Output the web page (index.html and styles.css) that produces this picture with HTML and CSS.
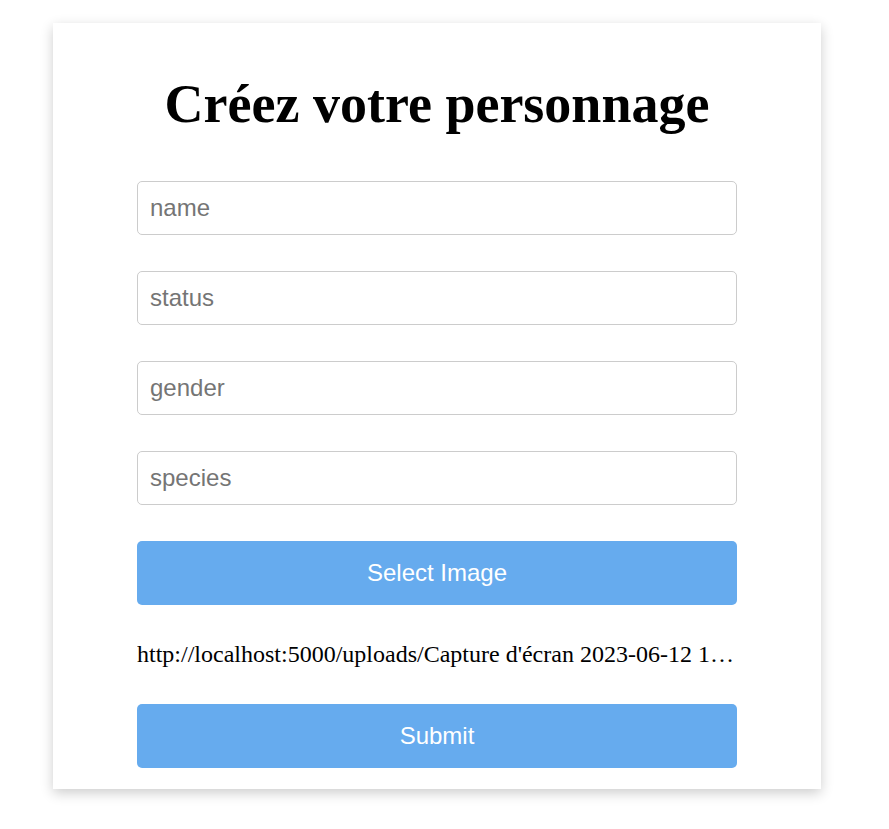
FILE: index.html
```html
<!DOCTYPE html>
<html lang="fr">
<head>
<meta charset="utf-8">
<title>Créez votre personnage</title>
<link rel="stylesheet" href="styles.css">
</head>
<body>
<div class="card">
  <h1 class="title">Créez votre personnage</h1>
  <form class="form">
    <input class="field" type="text" placeholder="name">
    <input class="field" type="text" placeholder="status">
    <input class="field" type="text" placeholder="gender">
    <input class="field" type="text" placeholder="species">
    <button class="btn" type="button">Select Image</button>
    <p class="url" title="http://localhost:5000/uploads/Capture d'écran 2023-06-12 153012.png">http://localhost:5000/uploads/Capture d'écran 2023-06-12 153012.png</p>
    <button class="btn" type="button">Submit</button>
  </form>
</div>
</body>
</html>
```
FILE: styles.css
```css
html, body {
  margin: 0;
  padding: 0;
  background: #fff;
}
body {
  font-family: "Liberation Serif", "Times New Roman", serif;
  padding-bottom: 30px;
}
.card {
  box-sizing: border-box;
  width: 768px;
  margin: 23px 0 0 53px;
  padding: 0 84px 21px;
  background: #fff;
  box-shadow: 0 4px 12px rgba(0, 0, 0, 0.2);
}
.title {
  margin: 0;
  padding-top: 50px;
  margin-bottom: 46px;
  font-family: "Liberation Serif", "Times New Roman", serif;
  font-size: 54px;
  line-height: 62px;
  font-weight: bold;
  text-align: center;
  white-space: nowrap;
  color: #000;
}
.form {
  display: flex;
  flex-direction: column;
  gap: 36px;
  margin: 0;
}
.field {
  box-sizing: border-box;
  height: 54px;
  width: 100%;
  margin: 0;
  padding: 0 12px;
  border: 1px solid #ccc;
  border-radius: 5px;
  font-family: "Liberation Sans", Arial, sans-serif;
  font-size: 24px;
  color: #000;
  outline: none;
}
.field::placeholder {
  color: #757575;
}
.btn {
  box-sizing: border-box;
  height: 64px;
  width: 100%;
  margin: 0;
  border: none;
  border-radius: 5px;
  background: #66abee;
  color: #fff;
  font-family: "Liberation Sans", Arial, sans-serif;
  font-size: 24px;
  cursor: pointer;
}
.url {
  margin: 0;
  min-width: 0;
  font-size: 24px;
  line-height: 27px;
  white-space: nowrap;
  overflow: hidden;
  text-overflow: ellipsis;
  color: #000;
}
```
